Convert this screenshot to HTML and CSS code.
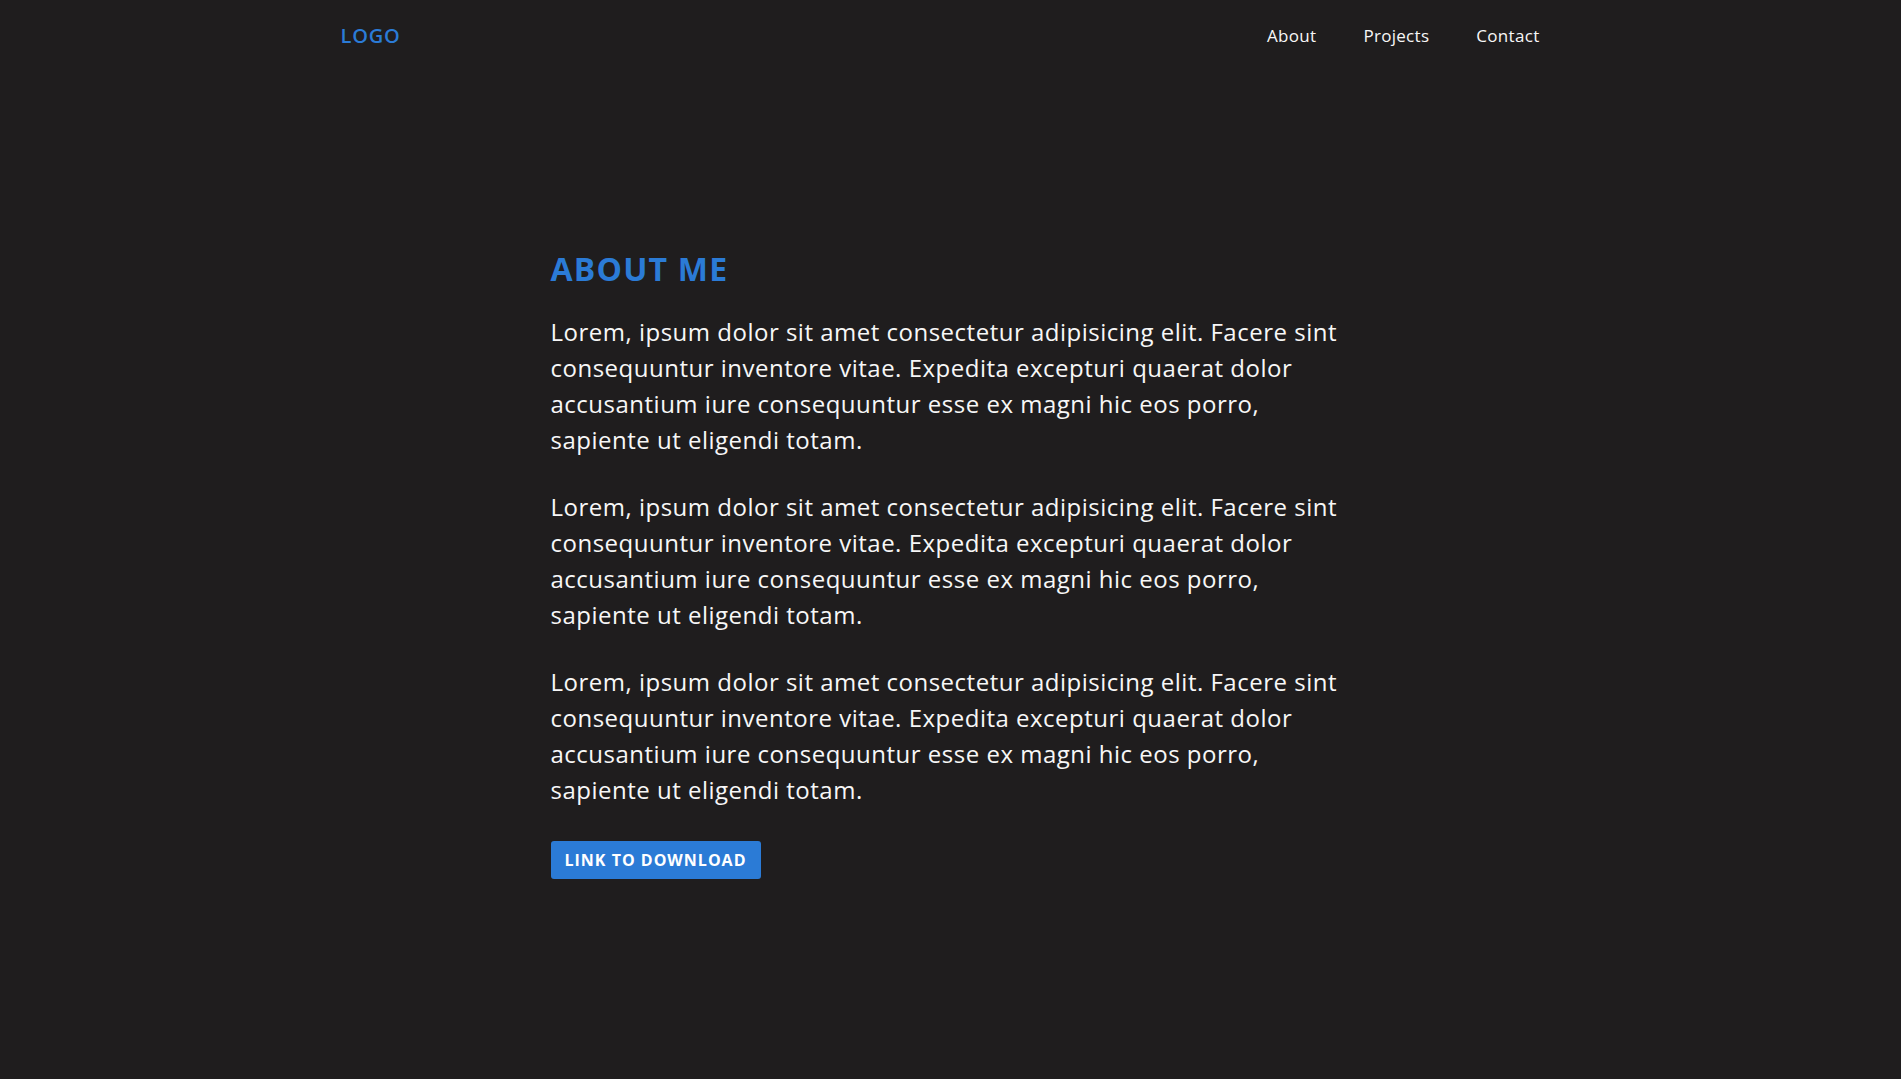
FILE: index.html
```html
<!DOCTYPE html>
<html lang="en">
<head>
<meta charset="utf-8">
<title>About Me</title>
<link rel="stylesheet" href="styles.css">
</head>
<body>
<header class="header">
  <a class="logo" href="#">LOGO</a>
  <nav class="nav">
    <a href="#">About</a>
    <a href="#">Projects</a>
    <a href="#">Contact</a>
  </nav>
</header>
<main class="about">
  <h1 class="about-title">ABOUT ME</h1>
  <p class="about-text">Lorem, ipsum dolor sit amet consectetur adipisicing elit. Facere sint consequuntur inventore vitae. Expedita excepturi quaerat dolor accusantium iure consequuntur esse ex magni hic eos porro, sapiente ut eligendi totam.</p>
  <p class="about-text">Lorem, ipsum dolor sit amet consectetur adipisicing elit. Facere sint consequuntur inventore vitae. Expedita excepturi quaerat dolor accusantium iure consequuntur esse ex magni hic eos porro, sapiente ut eligendi totam.</p>
  <p class="about-text">Lorem, ipsum dolor sit amet consectetur adipisicing elit. Facere sint consequuntur inventore vitae. Expedita excepturi quaerat dolor accusantium iure consequuntur esse ex magni hic eos porro, sapiente ut eligendi totam.</p>
  <a class="btn" href="#">LINK TO DOWNLOAD</a>
</main>
</body>
</html>
```
FILE: styles.css
```css
* { box-sizing: border-box; }
html, body {
  margin: 0;
  padding: 0;
  background: #1f1d1e;
  color: #f7f7f7;
  font-family: "Open Sans", Lato, sans-serif;
  min-height: 100%;
}
body { min-height: 1079px; }
a { text-decoration: none; }
.header {
  width: 1220px;
  margin: 0 auto;
  height: 70px;
  display: flex;
  align-items: center;
  justify-content: space-between;
}
.logo {
  color: #2b7bd6;
  font-size: 20px;
  font-weight: 600;
  letter-spacing: 0.8px;
}
.nav {
  display: flex;
  gap: 47px;
  padding-right: 21px;
}
.nav a {
  color: #f7f7f7;
  font-size: 17px;
  font-weight: 500;
  letter-spacing: 0.3px;
}
.about {
  width: 800px;
  margin: 0 auto;
  padding-top: 180px;
}
.about-title {
  margin: 0 0 26px;
  color: #2b7bd6;
  font-size: 32px;
  font-weight: 700;
  line-height: 1.2;
  letter-spacing: 1.2px;
}
.about-text {
  margin: 0 0 31px;
  font-size: 24px;
  line-height: 36px;
  letter-spacing: 0.5px;
}
.btn {
  display: inline-block;
  margin-top: 2px;
  background: #2b7bd6;
  color: #fff;
  font-size: 16px;
  font-weight: 700;
  letter-spacing: 1px;
  padding: 9px 14px;
  border-radius: 3px;
  line-height: 20px;
}
```
